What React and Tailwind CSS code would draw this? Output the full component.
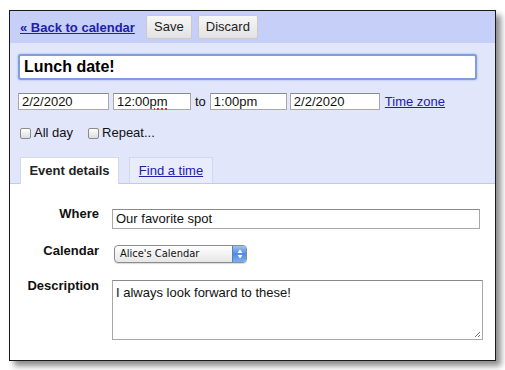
export default function App() {
    const arial = { fontFamily: '"Liberation Sans", Arial, sans-serif' };

    return (
        <div className="w-[505px] h-[370px] bg-white pt-[10px] pl-[9px] text-[13px] text-[#111]" style={arial}>
            <div className="w-[487px] h-[351px] border border-[#1a1a1a] bg-white shadow-[5px_5px_6px_rgba(0,0,0,0.45)] flex flex-col">
                {/* top bar */}
                <div className="h-[32px] bg-[#c5cff7] flex items-center pl-[10px]">
                    <a href="#" className="font-bold underline text-[#2020aa] leading-none">« Back to calendar</a>
                    <button className="ml-[11px] w-[46px] h-[24px] border border-[#cacaca] rounded-[2px] bg-gradient-to-b from-[#f7f7f7] to-[#e2e2e2] text-[#222]">
                        Save
                    </button>
                    <button className="ml-[6px] w-[60px] h-[24px] border border-[#cacaca] rounded-[2px] bg-gradient-to-b from-[#f7f7f7] to-[#e2e2e2] text-[#222]">
                        Discard
                    </button>
                </div>

                {/* event summary */}
                <div className="h-[140px] bg-[#e1e6fb] pt-[11px] flex flex-col">
                    <div className="ml-[8px] w-[459px] h-[26px] border-2 border-[#7f9ddf] rounded-[3px] bg-white shadow-[0_0_2px_rgba(90,120,210,0.6)] flex items-center pl-[4px] text-[16px] font-bold text-black">
                        Lunch date!
                    </div>

                    <div className="mt-[13px] h-[17px] flex items-center">
                        <div className="ml-[8px] w-[91px] h-[17px] border border-[#a8a8a8] border-t-[#8a8a8a] bg-white pl-[3px] leading-[15px]">2/2/2020</div>
                        <div className="ml-[4px] w-[78px] h-[17px] border border-[#a8a8a8] border-t-[#8a8a8a] bg-white pl-[3px] leading-[15px]">
                            12:00<span className="underline decoration-dotted decoration-[#e03030] decoration-2 underline-offset-2">pm</span>
                        </div>
                        <span className="ml-[4px]">to</span>
                        <div className="ml-[4px] w-[77px] h-[17px] border border-[#a8a8a8] border-t-[#8a8a8a] bg-white pl-[3px] leading-[15px]">1:00pm</div>
                        <div className="ml-[3px] w-[90px] h-[17px] border border-[#a8a8a8] border-t-[#8a8a8a] bg-white pl-[3px] leading-[15px]">2/2/2020</div>
                        <a href="#" className="ml-[5px] underline text-[#2020aa]">Time zone</a>
                    </div>

                    <div className="mt-[15px] h-[16px] flex items-center">
                        <span className="ml-[10px] w-[11px] h-[11px] border border-[#8a8a8a] rounded-[2px] bg-gradient-to-b from-white to-[#dcdcdc]" />
                        <span className="ml-[3px]">All day</span>
                        <span className="ml-[15px] w-[11px] h-[11px] border border-[#8a8a8a] rounded-[2px] bg-gradient-to-b from-white to-[#dcdcdc]" />
                        <span className="ml-[3px]">Repeat...</span>
                    </div>

                    <div className="mt-[16px] h-[26px] flex items-end">
                        <div className="relative z-10 ml-[10px] w-[99px] h-[27px] -mb-px bg-white border border-b-0 border-[#d3d8ef] flex items-center justify-center font-bold text-[#222]">
                            Event details
                        </div>
                        <div className="ml-[10px] w-[84px] h-[26px] bg-[#e9ecfc] border border-b-0 border-[#d3d8ef] flex items-center justify-center">
                            <a href="#" className="underline text-[#2020aa]">Find a time</a>
                        </div>
                    </div>
                </div>

                {/* details form */}
                <div className="flex-1 bg-white border-t border-[#c3c9e6] pt-[22px] flex flex-col">
                    <div className="flex items-start">
                        <div className="w-[89px] text-right font-bold leading-[16px]">Where</div>
                        <div className="ml-[13px] mt-[3px] w-[368px] h-[20px] border border-[#a8a8a8] border-t-[#8a8a8a] pl-[3px] leading-[18px]">
                            Our favorite spot
                        </div>
                    </div>

                    <div className="mt-[14px] flex items-start">
                        <div className="w-[89px] text-right font-bold leading-[16px]">Calendar</div>
                        <div className="ml-[15px] mt-[2px] w-[133px] h-[18px] rounded-[4px] border border-[#8c8c8c] bg-gradient-to-b from-white to-[#e6e6e6] flex items-center overflow-hidden shadow-[0_1px_1px_rgba(0,0,0,0.15)]">
                            <span className="flex-1 pl-[5px] text-[11px] text-[#111]" style={{ fontFamily: '"DejaVu Sans Condensed", "DejaVu Sans", sans-serif' }}>
                                Alice's Calendar
                            </span>
                            <span className="w-[14px] h-full border-l border-[#5a7fb8] bg-gradient-to-b from-[#9cc3f5] via-[#4f8ae0] to-[#7fb0f0] flex items-center justify-center">
                                <svg width="6" height="10" viewBox="0 0 6 10">
                                    <path d="M3 0.5 L5.5 4 L0.5 4 Z" fill="#fff" />
                                    <path d="M3 9.5 L5.5 6 L0.5 6 Z" fill="#fff" />
                                </svg>
                            </span>
                        </div>
                    </div>

                    <div className="mt-[15px] flex items-start">
                        <div className="w-[89px] text-right font-bold leading-[16px]">Description</div>
                        <div className="relative ml-[13px] mt-[2px] w-[371px] h-[60px] border border-[#a8a8a8] border-t-[#8a8a8a] pl-[3px] pt-[4px] leading-[16px]">
                            I always look forward to these!
                            <svg className="absolute right-[1px] bottom-[1px]" width="8" height="8" viewBox="0 0 8 8">
                                <path d="M7 2 L2 7 M7 5 L5 7" stroke="#777" strokeWidth="1" />
                            </svg>
                        </div>
                    </div>
                </div>
            </div>
        </div>
    );
}
